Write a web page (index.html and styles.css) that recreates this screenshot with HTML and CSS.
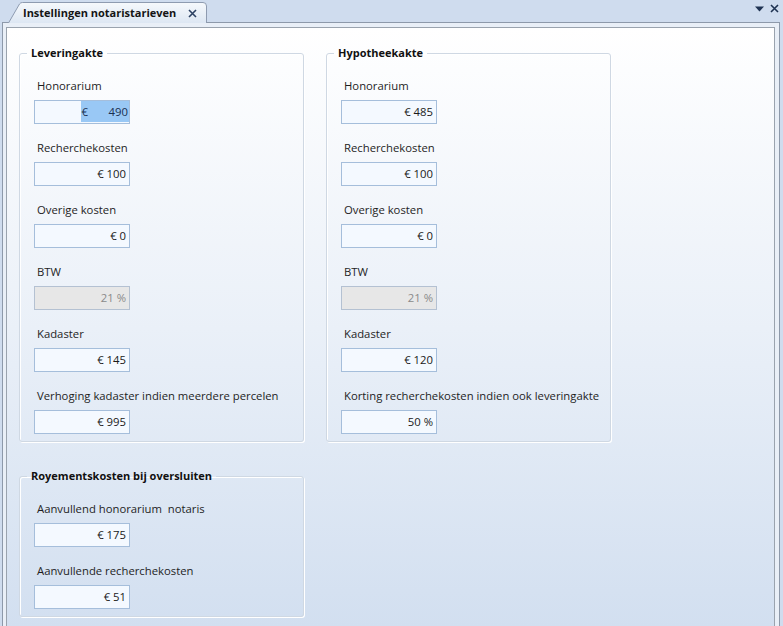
FILE: index.html
```html
<!DOCTYPE html>
<html lang="nl">
<head>
<meta charset="utf-8">
<title>Instellingen notaristarieven</title>
<link rel="stylesheet" href="styles.css">
</head>
<body>
<div class="tabbar">
  <div class="tab">
    <svg class="tab-shape" width="199" height="21" viewBox="0 0 199 21">
      <defs>
        <linearGradient id="tg" x1="0" y1="0" x2="0" y2="1">
          <stop offset="0" stop-color="#f6f9fc"/>
          <stop offset="1" stop-color="#dde7f3"/>
        </linearGradient>
      </defs>
      <path d="M0.5 21 L11.5 2 Q12.5 0.5 14.5 0.5 L195 0.5 Q198.5 0.5 198.5 4 L198.5 21" fill="url(#tg)" stroke="#8e9bb0" stroke-width="1"/>
    </svg>
    <span class="tab-title">Instellingen notaristarieven</span>
    <svg class="tab-close" width="9" height="9" viewBox="0 0 9 9"><path d="M1 1 L8 8 M8 1 L1 8" stroke="#2d4263" stroke-width="1.6"/></svg>
  </div>
  <div class="bar-tools">
    <svg width="9" height="6" viewBox="0 0 9 6"><path d="M0 0.5 H9 L4.5 5.5 Z" fill="#1f3352"/></svg>
    <svg width="9" height="9" viewBox="0 0 9 9"><path d="M1 1 L8 8 M8 1 L1 8" stroke="#1f3352" stroke-width="1.6"/></svg>
  </div>
</div>
<div class="frame">
  <div class="panel">
    <div class="groups">
      <fieldset class="group">
        <legend>Leveringakte</legend>
        <div class="field"><div class="label">Honorarium</div><div class="box"><span class="sel">€&nbsp;&nbsp;&nbsp;&nbsp;&nbsp;&nbsp;&nbsp;490</span></div></div>
        <div class="field"><div class="label">Recherchekosten</div><div class="box">€ 100</div></div>
        <div class="field"><div class="label">Overige kosten</div><div class="box">€ 0</div></div>
        <div class="field"><div class="label">BTW</div><div class="box disabled">21 %</div></div>
        <div class="field"><div class="label">Kadaster</div><div class="box">€ 145</div></div>
        <div class="field"><div class="label">Verhoging kadaster indien meerdere percelen</div><div class="box">€ 995</div></div>
      </fieldset>
      <fieldset class="group">
        <legend>Hypotheekakte</legend>
        <div class="field"><div class="label">Honorarium</div><div class="box">€ 485</div></div>
        <div class="field"><div class="label">Recherchekosten</div><div class="box">€ 100</div></div>
        <div class="field"><div class="label">Overige kosten</div><div class="box">€ 0</div></div>
        <div class="field"><div class="label">BTW</div><div class="box disabled">21 %</div></div>
        <div class="field"><div class="label">Kadaster</div><div class="box">€ 120</div></div>
        <div class="field"><div class="label">Korting recherchekosten indien ook leveringakte</div><div class="box">50 %</div></div>
      </fieldset>
    </div>
    <fieldset class="group royement">
      <legend>Royementskosten bij oversluiten</legend>
      <div class="field"><div class="label">Aanvullend honorarium&nbsp; notaris</div><div class="box">€ 175</div></div>
      <div class="field"><div class="label">Aanvullende recherchekosten</div><div class="box">€ 51</div></div>
    </fieldset>
  </div>
</div>
</body>
</html>
```
FILE: styles.css
```css
html, body {
  margin: 0;
  padding: 0;
  height: 100%;
  overflow: hidden;
}
body {
  background: #cfdcee;
  font-family: "Open Sans", "Liberation Sans", sans-serif;
  font-size: 11.3px;
  color: #1e1e1e;
}
.tabbar {
  height: 22px;
  display: flex;
  align-items: flex-start;
  justify-content: space-between;
  position: relative;
  z-index: 2;
}
.tab {
  position: relative;
  margin-left: 8px;
  margin-top: 2px;
  width: 199px;
  height: 21px;
  display: flex;
  align-items: center;
}
.tab-shape {
  position: absolute;
  left: 0;
  top: 0;
}
.tab-title {
  position: relative;
  margin-left: 15px;
  font-weight: bold;
  font-size: 11px;
  color: #151515;
  line-height: 20px;
}
.tab-close {
  position: relative;
  margin-left: 12px;
  margin-top: 1px;
}
.bar-tools {
  display: flex;
  align-items: center;
  gap: 6px;
  margin-top: 4px;
  margin-right: 4px;
}
.frame {
  margin-left: 2px;
  width: 778px;
  box-sizing: border-box;
  height: calc(100vh - 22px);
  border: 1px solid #8d99aa;
  border-bottom: none;
  padding: 4px 4px 0 3px;
  background: #e9eff7;
}
.panel {
  height: 100%;
  box-sizing: border-box;
  border: 1px solid #9aa3ae;
  border-bottom: none;
  background: linear-gradient(#ffffff 0px, #eaf0f8 300px, #d2dff0 600px);
  padding: 17px 12px 0 12px;
}
.groups {
  display: flex;
  gap: 22px;
}
.group {
  margin: 0;
  width: 285px;
  box-sizing: border-box;
  border: 1px solid #cfd8e3;
  border-radius: 3px;
  box-shadow: inset 1px 1px 0 #ffffff, 1px 1px 0 #ffffff;
  padding: 0 14px 7px 14px;
  min-width: 0;
}
.group legend {
  margin-left: -7px;
  padding: 0 4px;
  font-weight: bold;
  font-size: 11px;
  line-height: 16px;
  color: #111;
}
.royement {
  margin-top: 26px;
}
.field {
  margin-top: 17px;
}
.field + .field {
  margin-top: 16px;
}
.label {
  line-height: 16px;
  padding-left: 3px;
  white-space: nowrap;
}
.box {
  margin-top: 6px;
  width: 96px;
  height: 24px;
  box-sizing: border-box;
  border: 1px solid #a5bedb;
  background: #f4f9ff;
  text-align: right;
  padding-right: 3px;
  line-height: 22px;
  color: #1a1a1a;
}
.box.disabled {
  background: #e7e7e7;
  border-color: #b4c1d2;
  color: #8a8a8a;
}
.sel {
  display: inline-block;
  background: #99c8f5;
  color: #1a3050;
  line-height: 21px;
  margin-right: -3px;
  padding: 0 1px 0 1px;
}
```
